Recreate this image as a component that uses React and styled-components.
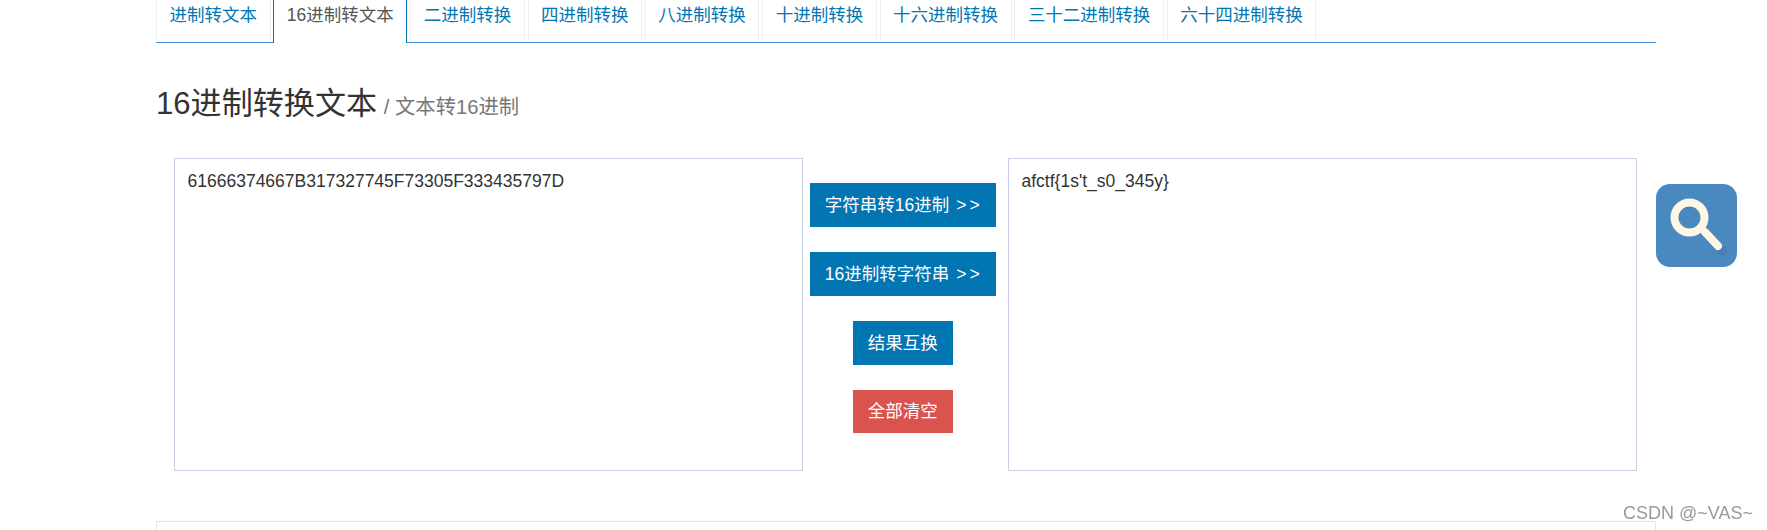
import styled, { createGlobalStyle } from "styled-components";

const GlobalStyle = createGlobalStyle`
  html, body {
    margin: 0;
    padding: 0;
    height: 100%;
    background: #fff;
    overflow: hidden;
  }
  body {
    font-family: "Liberation Sans", "Noto Sans CJK SC", sans-serif;
    font-size: 17.5px;
    line-height: 25px;
    color: #333;
  }
`;

const Page = styled.div`
  width: 1499.5px;
  height: 530px;
  margin-left: 156px;
  overflow: hidden;
`;

const TabList = styled.ul`
  display: flex;
  box-sizing: border-box;
  height: 42.5px;
  margin: 0;
  padding: 0;
  list-style: none;
  border-bottom: 1.25px solid #3f8fe0;
`;

const Tab = styled.li`
  box-sizing: border-box;
  height: ${({ $active }) => ($active ? "42.5px" : "41.25px")};
  margin-right: 2.85px;
  padding: 3px 12.5px 0;
  color: ${({ $active }) => ($active ? "#555" : "#0275b3")};
  background: #fff;
  border-style: solid;
  border-width: 0 1.25px;
  border-color: ${({ $active }) => ($active ? "#0275b3" : "#eee")};
  white-space: nowrap;
`;

const Heading = styled.h1`
  margin: 0;
  padding-top: 41px;
  height: 115.5px;
  box-sizing: border-box;
  font-size: 31.1px;
  font-weight: 400;
  line-height: 40px;
  color: #333;
`;

const SubHeading = styled.small`
  margin-left: -2px;
  font-size: 20.3px;
  color: #777;
`;

const Converter = styled.div`
  display: grid;
  grid-template-columns: 628.5px 1fr 628.5px;
  width: 1462.5px;
  height: 312.5px;
  margin-left: 18px;
`;

const TextBox = styled.textarea`
  box-sizing: border-box;
  width: 100%;
  height: 100%;
  margin: 0;
  padding: 10px 12.5px;
  border: 1.25px solid #c6d0e2;
  border-radius: 0;
  outline: none;
  resize: none;
  overflow: hidden;
  font: inherit;
  color: #333;
  background: #fff;
`;

const Actions = styled.div`
  display: flex;
  flex-direction: column;
  align-items: center;
  gap: 25px;
  padding: 24.7px 5px 0 0;
`;

const Button = styled.button`
  box-sizing: border-box;
  height: ${({ $danger }) => ($danger ? "43px" : "44px")};
  margin: 0;
  padding: 1px 15px 0;
  border: 0;
  border-radius: 0;
  font: inherit;
  color: #fff;
  background: ${({ $danger }) => ($danger ? "#d9534f" : "#0275b3")};
  white-space: nowrap;
`;

const Arrows = styled.span`
  margin: 0 -2px 0 2px;
  letter-spacing: 3px;
`;

const BottomPanel = styled.div`
  height: 40px;
  margin-top: 50px;
  border: 1.25px solid #e3e3e3;
  border-bottom: 0;
`;

const SearchButton = styled.div`
  position: fixed;
  left: 1656px;
  top: 184px;
  width: 81px;
  height: 83px;
`;

const Watermark = styled.div`
  position: fixed;
  left: 1623px;
  top: 501px;
  font-size: 18px;
  line-height: 24px;
  color: #9a9a9a;
  white-space: nowrap;
`;

const SearchIcon = () => (
  <svg width="81" height="83" viewBox="0 0 81 83">
    <rect width="81" height="83" rx="14" fill="#4a88c0" />
    <path d="M52 51 L65 65" stroke="#3f78ab" strokeWidth="9" strokeLinecap="round" opacity="0.5" transform="translate(1 2)" />
    <circle cx="33.5" cy="33.5" r="15" fill="none" stroke="#fdf7e3" strokeWidth="8" />
    <path d="M49 48 L62 62" stroke="#fdf7e3" strokeWidth="8" strokeLinecap="round" />
  </svg>
);

const tabs = [
  "进制转文本",
  "16进制转文本",
  "二进制转换",
  "四进制转换",
  "八进制转换",
  "十进制转换",
  "十六进制转换",
  "三十二进制转换",
  "六十四进制转换",
];

const App = () => {
  return (
    <>
      <GlobalStyle />
      <Page>
        <TabList>
          {tabs.map((name, i) => (
            <Tab key={name} $active={i === 1}>
              {name}
            </Tab>
          ))}
        </TabList>
        <Heading>
          16进制转换文本 <SubHeading>/ 文本转16进制</SubHeading>
        </Heading>
        <Converter>
          <TextBox defaultValue="61666374667B317327745F73305F333435797D" />
          <Actions>
            <Button>
              字符串转16进制 <Arrows>&gt;&gt;</Arrows>
            </Button>
            <Button>
              16进制转字符串 <Arrows>&gt;&gt;</Arrows>
            </Button>
            <Button>结果互换</Button>
            <Button $danger>全部清空</Button>
          </Actions>
          <TextBox defaultValue="afctf{1s't_s0_345y}" />
        </Converter>
        <BottomPanel />
      </Page>
      <SearchButton>
        <SearchIcon />
      </SearchButton>
      <Watermark>CSDN @~VAS~</Watermark>
    </>
  );
};

export default App;
